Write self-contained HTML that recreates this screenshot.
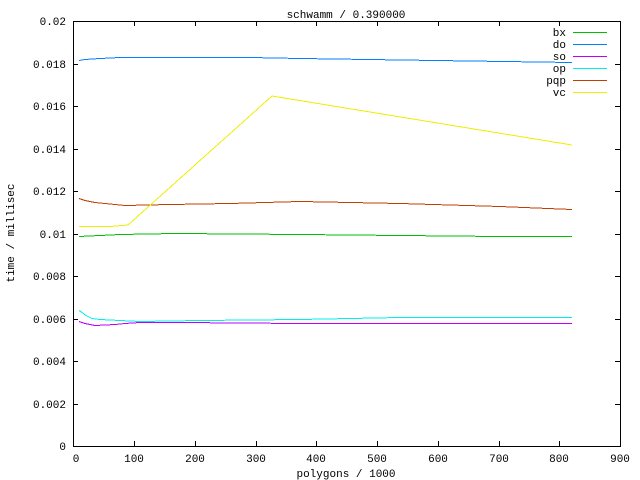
<!DOCTYPE html>
<html><head><style>body{margin:0;background:#fff}svg{display:block}text{font-family:"Liberation Mono",monospace;font-size:11px;fill:#000}</style></head><body>
<svg width="640" height="480" xmlns="http://www.w3.org/2000/svg">
<rect width="640" height="480" fill="#fff"/>
<g stroke="#000" stroke-width="1" fill="none" shape-rendering="crispEdges">
<rect x="73.5" y="21.5" width="547" height="425"/>
<path d="M73 64.5h5M73 106.5h5M73 149.5h5M73 191.5h5M73 234.5h5M73 276.5h5M73 319.5h5M73 361.5h5M73 404.5h5
M620 64.5h-5M620 106.5h-5M620 149.5h-5M620 191.5h-5M620 234.5h-5M620 276.5h-5M620 319.5h-5M620 361.5h-5M620 404.5h-5
M134.5 446v-5M195.5 446v-5M256.5 446v-5M316.5 446v-5M377.5 446v-5M438.5 446v-5M499.5 446v-5M559.5 446v-5
M134.5 21v5M195.5 21v5M256.5 21v5M316.5 21v5M377.5 21v5M438.5 21v5M499.5 21v5M559.5 21v5"/>
</g>
<g text-anchor="end">
<text x="66" y="25">0.02</text><text x="66" y="68">0.018</text><text x="66" y="110">0.016</text><text x="66" y="153">0.014</text><text x="66" y="195">0.012</text><text x="66" y="238">0.01</text><text x="66" y="280">0.008</text><text x="66" y="323">0.006</text><text x="66" y="365">0.004</text><text x="66" y="408">0.002</text><text x="66" y="450">0</text>
</g>
<g text-anchor="middle">
<text x="76" y="462">0</text><text x="134" y="462">100</text><text x="195" y="462">200</text><text x="256" y="462">300</text><text x="316" y="462">400</text><text x="377" y="462">500</text><text x="438" y="462">600</text><text x="499" y="462">700</text><text x="559" y="462">800</text><text x="620" y="462">900</text>
<text x="346" y="477">polygons / 1000</text>
<text x="346" y="18">schwamm / 0.390000</text>
<text transform="translate(14,233) rotate(-90)">time / millisec</text>
</g>
<g text-anchor="end">
<text x="566" y="36">bx</text><text x="566" y="48">do</text><text x="566" y="60">so</text><text x="566" y="72">op</text><text x="566" y="84">pqp</text><text x="566" y="96">vc</text>
</g>
<g fill="none" stroke-width="1" shape-rendering="crispEdges">
<path stroke="#00c000" d="M573 32.5h34M79 236.5L100 235.5L120 234.5L175 233.5L300 234.5L500 236.5L572 236.5"/>
<path stroke="#0080ff" d="M573 44.5h34M79 60.5L85 59.5L100 58.5L120 57.5L250 57.5L300 58.5L572 62.5"/>
<path stroke="#c000ff" d="M573 56.5h34M79 321.5L85 323.5L95 325.5L115 324.5L125 323.5L140 322.5L180 322.5L300 323.5L572 323.5"/>
<path stroke="#00eeee" d="M573 68.5h34M79 310.5L82 312.5L86 315.5L92 318.5L100 319.5L120 320.5L140 321.5L200 320.5L300 319.5L400 317.5L572 317.5"/>
<path stroke="#c04000" d="M573 80.5h34M79 198.5L85 200.5L90 201.5L95 202.5L105 203.5L115 204.5L125 205.5L170 204.5L230 203.5L300 201.5L400 203.5L500 206.5L572 209.5"/>
<path stroke="#eeee00" d="M573 92.5h34M79 226.5L110 226.5L128 225L272 96L572 145"/>
</g>
</svg>
</body></html>
